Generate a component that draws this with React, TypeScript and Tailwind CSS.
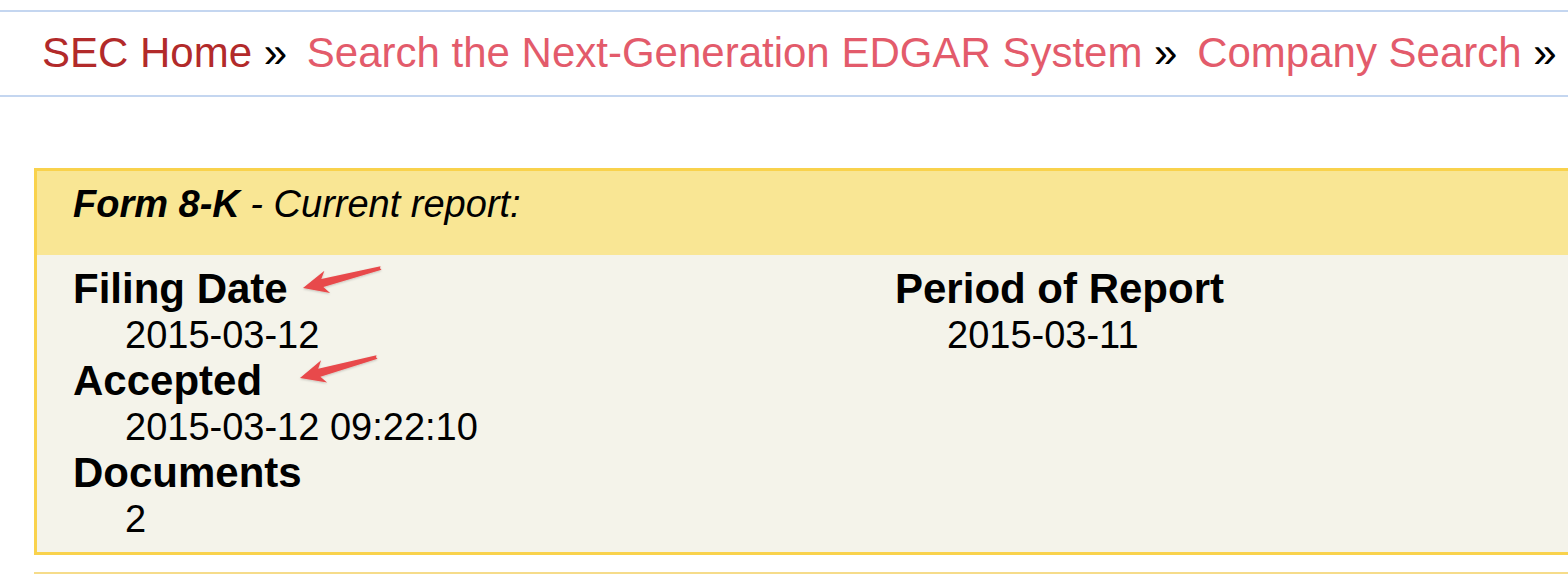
import React from "react";

type Pt = [number, number];

function arrowPoints(tail: Pt, tip: Pt): string {
  const dx = tip[0] - tail[0];
  const dy = tip[1] - tail[1];
  const L = Math.hypot(dx, dy);
  const ux = dx / L;
  const uy = dy / L;
  const nx = -uy;
  const ny = ux;
  const at = (base: Pt, back: number, side: number): Pt => [
    base[0] - ux * back + nx * side,
    base[1] - uy * back + ny * side,
  ];
  const pts: Pt[] = [
    tip,
    at(tip, 25, 11.5),
    at(tip, 20, 4.2),
    at(tail, 0, 1.9),
    at(tail, -1, 0),
    at(tail, 0, -1.9),
    at(tip, 20, -4.2),
    at(tip, 25, -11.5),
  ];
  return pts.map((p) => `${p[0].toFixed(1)},${p[1].toFixed(1)}`).join(" ");
}

function Field({ label, value }: { label: string; value: string }) {
  return (
    <div>
      <div className="text-[42px] font-bold leading-[46px]">{label}</div>
      <div className="pl-[52px] text-[38px] leading-[46px]">{value}</div>
    </div>
  );
}

export default function App() {
  return (
    <div className="relative h-[574px] w-[1568px] overflow-hidden bg-white font-['Liberation_Sans',Arial,sans-serif] text-black">
      <nav className="mt-[10px] h-[87px] whitespace-nowrap border-y-2 border-[#c4d6f0] pl-[42px] pt-[17px] text-[42px] leading-[48px]">
        <a className="text-[#b22a2a]">SEC Home</a>
        <span> » </span>
        <a className="ml-[8px] text-[#e35b6b]">Search the Next-Generation EDGAR System</a>
        <span> » </span>
        <a className="ml-[8px] text-[#e35b6b]">Company Search</a>
        <span> »</span>
      </nav>

      <div className="ml-[34px] mt-[71px] border-y-[3px] border-l-[3px] border-[#f9d24c]">
        <div className="h-[84px] bg-[#f9e694] pl-[36px] pt-[10px] text-[38px] italic leading-[46px]">
          <span className="font-bold">Form 8-K</span>
          <span> - Current report:</span>
        </div>
        <div className="grid grid-cols-[822px_1fr] bg-[#f4f3ea] pb-[10px] pl-[36px] pt-[11px]">
          <div>
            <Field label="Filing Date" value="2015-03-12" />
            <Field label="Accepted" value="2015-03-12 09:22:10" />
            <Field label="Documents" value="2" />
          </div>
          <div>
            <Field label="Period of Report" value="2015-03-11" />
          </div>
        </div>
      </div>
      <div className="ml-[34px] mt-[17px] h-[2px] bg-[#f6dc8a]" />

      <svg
        className="pointer-events-none absolute left-0 top-0"
        width={1568}
        height={574}
        viewBox="0 0 1568 574"
      >
        <defs>
          <filter id="sh" x="-20%" y="-50%" width="140%" height="200%">
            <feDropShadow dx="0" dy="1" stdDeviation="1" floodColor="#000" floodOpacity="0.2" />
          </filter>
        </defs>
        <polygon points={arrowPoints([381, 268], [303, 288])} fill="#e84a4b" filter="url(#sh)" />
        <polygon points={arrowPoints([377, 357], [300, 378])} fill="#e84a4b" filter="url(#sh)" />
      </svg>
    </div>
  );
}
